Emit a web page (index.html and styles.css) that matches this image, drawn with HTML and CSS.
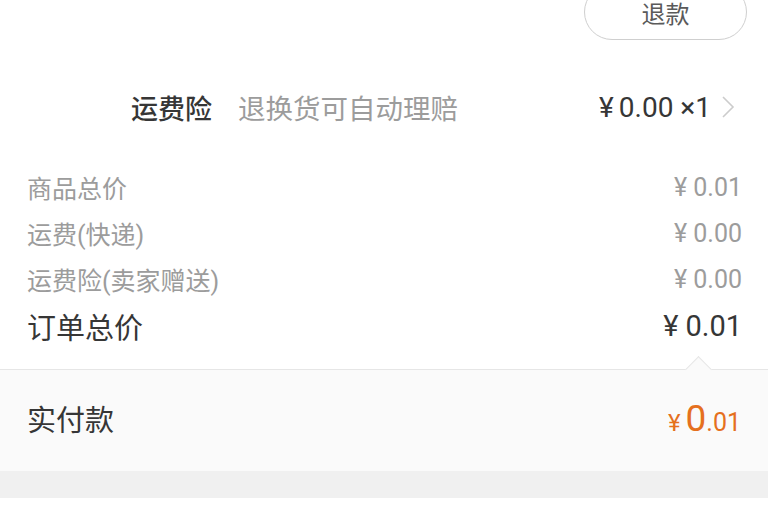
FILE: index.html
```html
<!DOCTYPE html>
<html lang="zh-CN">
<head>
<meta charset="utf-8">
<link rel="stylesheet" href="styles.css">
</head>
<body>
<div class="page">
  <div class="top">
    <button class="refund">退款</button>
  </div>
  <div class="insurance">
    <span class="ins-title">运费险</span>
    <span class="ins-desc">退换货可自动理赔</span>
    <span class="ins-price">¥<span class="sp"></span>0.00 ×1</span>
    <svg class="chev" width="14" height="24" viewBox="0 0 14 24"><path d="M2 2 L12 12 L2 22" fill="none" stroke="#cccccc" stroke-width="1.6"/></svg>
  </div>
  <div class="summary">
    <div class="row"><span>商品总价</span><span class="amt">¥<span class="sp"></span>0.01</span></div>
    <div class="row"><span>运费(快递)</span><span class="amt">¥<span class="sp"></span>0.00</span></div>
    <div class="row"><span>运费险(卖家赠送)</span><span class="amt">¥<span class="sp"></span>0.00</span></div>
    <div class="row total"><span>订单总价</span><span class="amt">¥<span class="sp"></span>0.01</span></div>
    <div class="notch"></div>
  </div>
  <div class="pay">
    <span class="pay-label">实付款</span>
    <span class="pay-amt"><span class="yen">¥</span><span class="big">0</span><span class="small">.01</span></span>
  </div>
  <div class="band"></div>
</div>
</body>
</html>
```
FILE: styles.css
```css
html, body {
  margin: 0;
  padding: 0;
  background: #ffffff;
}
body {
  font-family: Roboto, "Noto Sans CJK SC", sans-serif;
  color: #363636;
}
.page {
  width: 768px;
  height: 510px;
  overflow: hidden;
  background: #ffffff;
}
.top {
  height: 40px;
  display: flex;
  justify-content: flex-end;
  padding-right: 21px;
  overflow: visible;
}
.refund {
  margin-top: -16px;
  width: 163px;
  height: 56px;
  border: 1.5px solid #cfcfcf;
  border-radius: 28px;
  background: #ffffff;
  color: #5a5a5a;
  font-family: Roboto, "Noto Sans CJK SC", sans-serif;
  font-size: 24px;
  padding: 0;
  display: flex;
  align-items: center;
  justify-content: center;
}
.insurance {
  display: flex;
  align-items: center;
  height: 56px;
  padding: 39px 33px 29px 131px;
}
.ins-title {
  font-size: 27px;
  color: #363636;
  font-weight: 500;
}
.ins-desc {
  font-size: 27.5px;
  color: #9c9c9c;
  margin-left: 26px;
  flex: 1;
}
.ins-price {
  font-size: 28px;
  color: #363636;
}
.sp {
  display: inline-block;
  width: 5px;
}
.chev {
  margin-left: 10px;
}
.summary {
  position: relative;
  padding: 0 26px 20px 27px;
  border-bottom: 1px solid #e6e6e6;
}
.row {
  display: flex;
  justify-content: space-between;
  align-items: center;
  height: 46px;
  font-size: 25px;
  color: #9c9c9c;
}
.row .sp {
  width: 6px;
}
.row.total {
  font-size: 29px;
  color: #363636;
  height: 47px;
}
.row.total .sp {
  width: 7px;
}
.notch {
  position: absolute;
  right: 60px;
  bottom: -10px;
  width: 18px;
  height: 18px;
  background: #fafafa;
  border-top: 1px solid #e6e6e6;
  border-left: 1px solid #e6e6e6;
  transform: rotate(45deg);
}
.pay {
  background: #fafafa;
  display: flex;
  justify-content: space-between;
  align-items: center;
  height: 52px;
  padding: 22px 27px 27px 27px;
}
.pay-label {
  font-size: 29px;
  color: #363636;
}
.pay-amt {
  color: #e5701e;
  display: flex;
  align-items: baseline;
}
.pay-amt .yen {
  font-size: 24px;
  margin-right: 5px;
}
.pay-amt .big {
  font-size: 37px;
}
.pay-amt .small {
  font-size: 25px;
}
.band {
  height: 27px;
  background: #f0f0f0;
}
```
